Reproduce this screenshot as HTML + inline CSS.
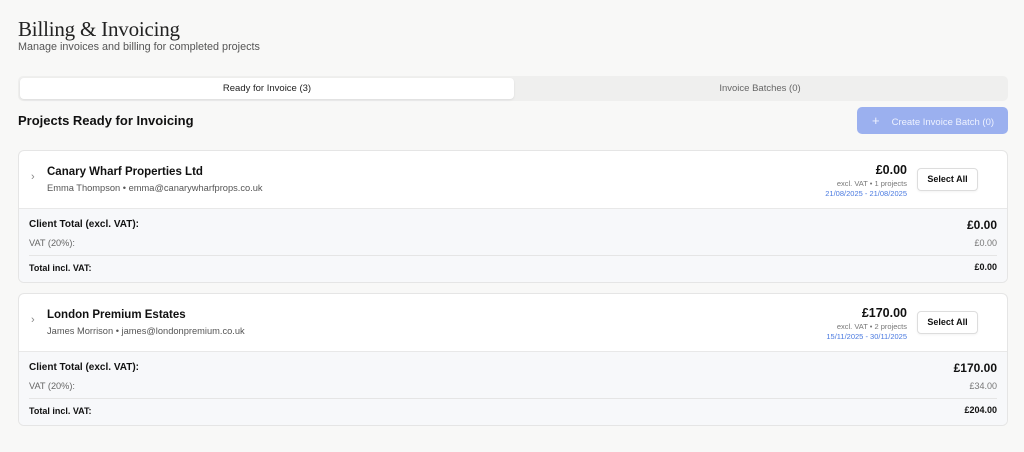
<!DOCTYPE html>
<html><head><style>
*{box-sizing:border-box;margin:0;padding:0}
body{width:1024px;height:452px;background:#f8f8f7;font-family:"Liberation Sans",sans-serif;color:#111;position:relative;overflow:hidden}
.a{position:absolute}
h1{position:absolute;left:18px;top:17px;font-family:"Liberation Serif",serif;font-size:21px;font-weight:normal;color:#222;letter-spacing:-0.2px}
.sub{left:18px;top:41px;font-size:10.8px;color:#555}
.tabs{left:18px;top:76px;width:990px;height:25px;background:#efefee;border-radius:5px}
.tab{position:absolute;top:2px;height:21px;font-size:9.5px;line-height:21px;text-align:center}
.t1{left:2px;width:494px;background:#fff;border-radius:4px;box-shadow:0 1px 2px rgba(0,0,0,.08);color:#222}
.t2{left:496px;width:492px;color:#666}
.h2{left:18px;top:113px;font-size:13px;font-weight:bold}
.btn{left:857px;top:107px;width:151px;height:27px;background:#9bb0ef;border-radius:5px;color:#eef2ff;font-size:9.5px;line-height:27px;padding-left:15px}
.card{left:18px;width:990px;height:133px;background:#fff;border:1px solid #e5e5e5;border-radius:6px;overflow:hidden}
.hd{height:58px;position:relative;border-bottom:1px solid #e8e8e8}
.ft{background:#f7f8fa;height:75px;position:relative}
.chev{left:12px;top:20px;color:#888;font-size:11px}
.nm{left:28px;top:15px;font-size:11.5px;font-weight:bold}
.ct{left:28px;top:32px;font-size:9.3px;color:#555}
.amt{right:100px;top:12px;font-size:12.5px;font-weight:bold}
.ex{right:100px;top:28px;font-size:7.5px;color:#777}
.dt{right:100px;top:38px;font-size:7.5px;color:#4a7ae0}
.sel{right:29px;top:17px;width:61px;height:23px;border:1px solid #ddd;border-radius:4px;font-size:9px;font-weight:bold;line-height:21px;text-align:center;background:#fff;box-shadow:0 1px 2px rgba(0,0,0,.05)}
.l1{left:10px;top:10px;font-size:10px;font-weight:bold}
.r1{right:10px;top:9px;font-size:12px;font-weight:bold}
.l2{left:10px;top:29px;font-size:9.2px;color:#666}
.r2{right:10px;top:29px;font-size:9px;color:#777}
.line{left:10px;right:10px;top:46px;height:1px;background:#e5e5e5}
.l3{left:10px;top:54px;font-size:9px;font-weight:bold}
.r3{right:10px;top:53px;font-size:9px;font-weight:bold}
</style></head><body>
<h1>Billing &amp; Invoicing</h1>
<div class="a sub">Manage invoices and billing for completed projects</div>
<div class="a tabs"><div class="tab t1">Ready for Invoice (3)</div><div class="tab t2">Invoice Batches (0)</div></div>
<div class="a h2">Projects Ready for Invoicing</div>
<div class="a btn"><span style="font-size:13px;margin-right:12px">+</span>Create Invoice Batch (0)</div>

<div class="a card" style="top:150px">
<div class="hd"><div class="a chev">›</div><div class="a nm">Canary Wharf Properties Ltd</div><div class="a ct">Emma Thompson • emma@canarywharfprops.co.uk</div>
<div class="a amt">£0.00</div><div class="a ex">excl. VAT • 1 projects</div><div class="a dt">21/08/2025 - 21/08/2025</div><div class="a sel">Select All</div></div>
<div class="ft"><div class="a l1">Client Total (excl. VAT):</div><div class="a r1">£0.00</div><div class="a l2">VAT (20%):</div><div class="a r2">£0.00</div><div class="a line"></div><div class="a l3">Total incl. VAT:</div><div class="a r3">£0.00</div></div>
</div>

<div class="a card" style="top:293px">
<div class="hd"><div class="a chev">›</div><div class="a nm">London Premium Estates</div><div class="a ct">James Morrison • james@londonpremium.co.uk</div>
<div class="a amt">£170.00</div><div class="a ex">excl. VAT • 2 projects</div><div class="a dt">15/11/2025 - 30/11/2025</div><div class="a sel">Select All</div></div>
<div class="ft"><div class="a l1">Client Total (excl. VAT):</div><div class="a r1">£170.00</div><div class="a l2">VAT (20%):</div><div class="a r2">£34.00</div><div class="a line"></div><div class="a l3">Total incl. VAT:</div><div class="a r3">£204.00</div></div>
</div>
</body></html>
